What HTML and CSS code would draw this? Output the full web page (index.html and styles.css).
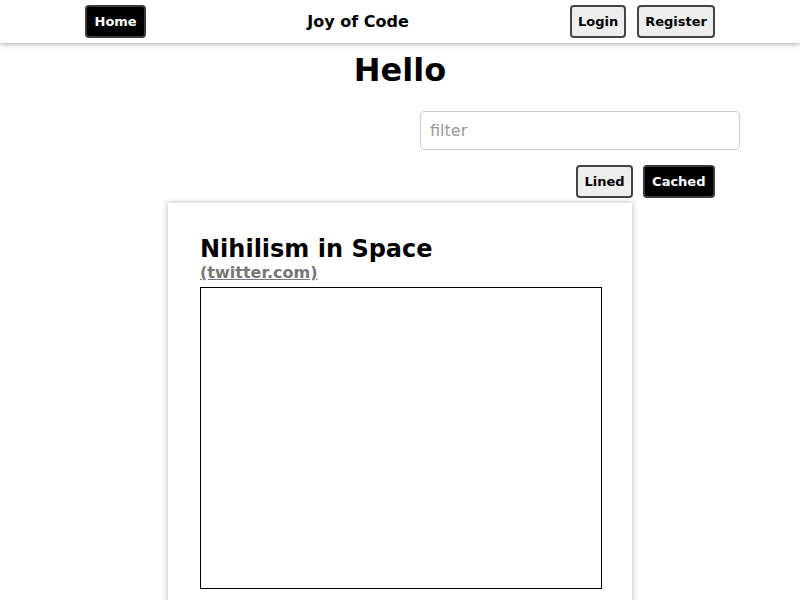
FILE: index.html
```html
<!DOCTYPE html>
<html>
<head>
<meta charset="utf-8">
<title>Joy of Code</title>
<link rel="stylesheet" href="styles.css">
</head>
<body>
<header class="topbar">
  <nav class="nav">
    <button class="btn btn-dark">Home</button>
    <span class="brand">Joy of Code</span>
    <div class="nav-right">
      <button class="btn">Login</button>
      <button class="btn">Register</button>
    </div>
  </nav>
</header>
<main class="main">
  <h1 class="title">Hello</h1>
  <div class="filter-row">
    <input class="filter" type="text" placeholder="filter">
  </div>
  <div class="toggle-row">
    <button class="btn">Lined</button>
    <button class="btn btn-dark">Cached</button>
  </div>
  <article class="card">
    <h2 class="card-title">Nihilism in Space</h2>
    <a class="card-link" href="#">(twitter.com)</a>
    <div class="frame"></div>
  </article>
</main>
</body>
</html>
```
FILE: styles.css
```css
html, body {
  margin: 0;
  padding: 0;
  background: #fff;
  font-family: "DejaVu Sans", sans-serif;
  color: #000;
  overflow: hidden;
}
.topbar {
  height: 43px;
  background: #fff;
  box-shadow: 0 1px 5px rgba(0,0,0,0.35);
  position: relative;
  z-index: 1;
}
.nav {
  width: 630px;
  margin: 0 auto;
  height: 43px;
  display: flex;
  align-items: center;
  justify-content: space-between;
  box-sizing: border-box;
}
.nav-right {
  display: flex;
  gap: 11px;
}
.brand {
  font-weight: bold;
  font-size: 16px;
}
.btn {
  font-family: "DejaVu Sans", sans-serif;
  font-weight: bold;
  font-size: 13px;
  height: 33px;
  padding: 0 6px;
  border: 2px solid #444;
  border-radius: 4px;
  background: #eee;
  color: #000;
}
.btn-dark {
  background: #000;
  color: #fff;
  border-color: #3a3a3a;
  padding: 0 7.5px;
}
.main {
  display: flex;
  flex-direction: column;
  align-items: center;
}
.title {
  font-size: 32px;
  font-weight: bold;
  margin: 8px 0 0;
}
.filter-row {
  align-self: stretch;
  display: flex;
  justify-content: flex-end;
  padding-right: 60px;
  margin-top: 22px;
}
.filter {
  width: 320px;
  height: 39px;
  box-sizing: border-box;
  border: 1px solid #ccc;
  border-radius: 4px;
  padding: 0 9px;
  font-family: "DejaVu Sans", sans-serif;
  font-size: 16px;
}
.filter::placeholder {
  color: #999;
}
.toggle-row {
  width: 630px;
  display: flex;
  justify-content: flex-end;
  gap: 10px;
  margin-top: 15px;
}
.card {
  width: 400px;
  padding: 32px;
  margin-top: 5px;
  box-shadow: 0 0 6px rgba(0,0,0,0.3);
  background: #fff;
  display: flex;
  flex-direction: column;
  align-items: flex-start;
}
.card-title {
  font-size: 24px;
  font-weight: bold;
  margin: 0;
}
.card-link {
  font-size: 16px;
  font-weight: bold;
  color: #777;
  text-decoration: underline;
}
.frame {
  width: 400px;
  height: 300px;
  border: 1px solid #000;
  margin-top: 5px;
}
```
